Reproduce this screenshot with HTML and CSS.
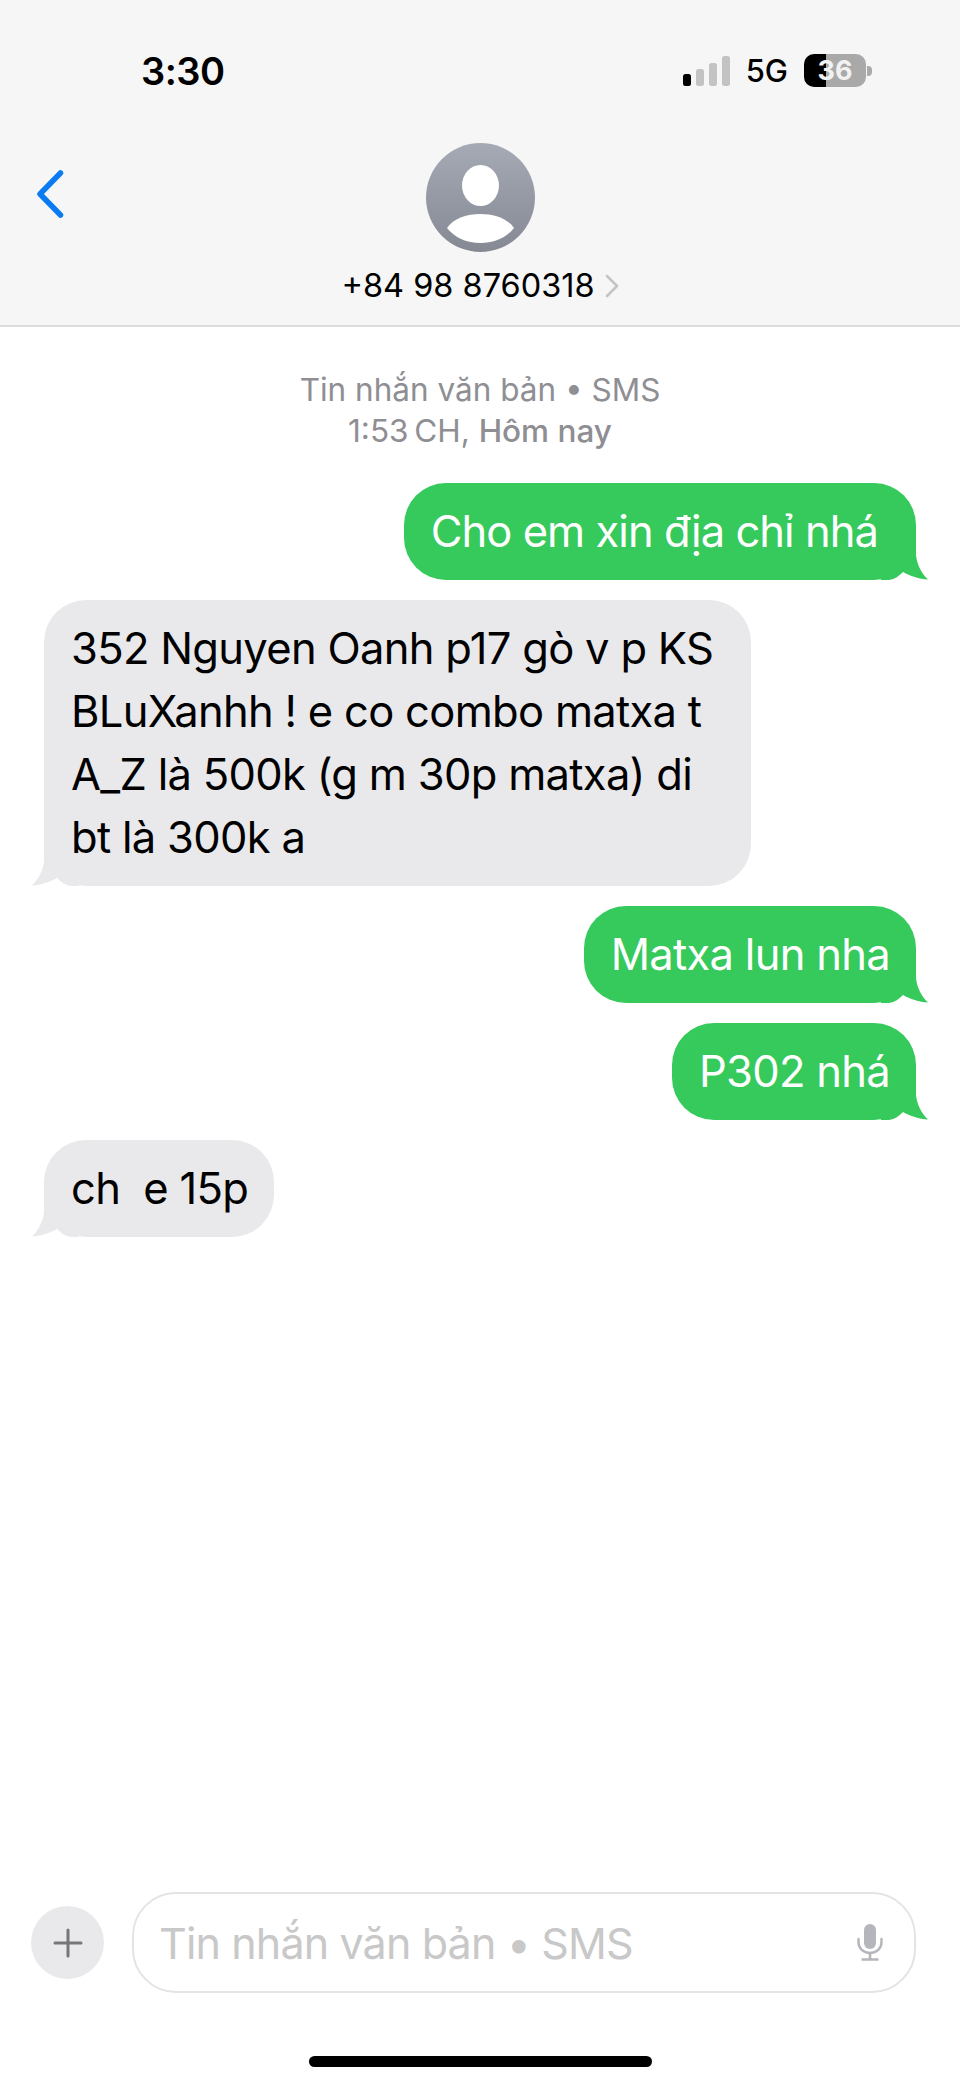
FILE: index.html
```html
<!DOCTYPE html>
<html lang="vi">
<head>
  <meta charset="UTF-8">
  <meta name="viewport" content="width=device-width, initial-scale=1.0">
  <title>Tin nhắn</title>
  <link rel="stylesheet" href="styles.css">
</head>
<body>
  <svg class="defs" width="0" height="0">
    <symbol id="tail" viewBox="0 0 50 50">
      <path d="M35 8 L35 25 C36 35 41 44 47 49.500 C38 49 29 46 22 42 C18 46 14 49 8 50 L0 50 L0 0 Z"/>
    </symbol>
  </svg>

  <header class="top">
    <div class="status">
      <span class="time">3:30</span>
      <div class="status-right">
        <div class="signal">
          <i class="bar bar1 on"></i>
          <i class="bar bar2"></i>
          <i class="bar bar3"></i>
          <i class="bar bar4"></i>
        </div>
        <span class="net">5G</span>
        <div class="battery"><span class="battery-num">36</span></div>
        <i class="battery-tip"></i>
      </div>
    </div>
    <div class="contact">
      <svg class="back" width="28" height="48" viewBox="0 0 28 48"><path d="M24.500 3 L4 24 L24.500 45" fill="none" stroke="#0a7bf0" stroke-width="5.500" stroke-linecap="round" stroke-linejoin="round"/></svg>
      <svg class="avatar" width="109" height="109" viewBox="0 0 109 109">
        <defs>
          <linearGradient id="avatarFill" x1="0" y1="0" x2="0" y2="1">
            <stop offset="0" stop-color="#a6aab4"/>
            <stop offset="1" stop-color="#858994"/>
          </linearGradient>
        </defs>
        <circle cx="54.500" cy="54.500" r="54.500" fill="url(#avatarFill)"/>
        <ellipse cx="54.500" cy="42.500" rx="18.500" ry="20.500" fill="#fff"/>
        <path d="M21 85 C28 75 41 71 54.500 71 C68 71 81 75 88 85 C80 95 68 100 54.500 100 C41 100 29 95 21 85 Z" fill="#fff"/>
      </svg>
      <div class="phone">
        <span>+84 98 8760318</span>
        <svg width="14" height="24" viewBox="0 0 14 24"><path d="M2 2 L12 12 L2 22" fill="none" stroke="#c4c4c6" stroke-width="2.600" stroke-linecap="round" stroke-linejoin="round"/></svg>
      </div>
    </div>
  </header>

  <main class="thread">
    <p class="meta">Tin nhắn văn bản • SMS<br>1:53&thinsp;CH, <b>Hôm nay</b></p>

    <div class="bubble sent wide tight">Cho em xin địa chỉ nhá<svg class="tail"><use href="#tail"/></svg></div>
    <div class="bubble received wide">352 Nguyen Oanh p17 gò v p KS<br>BLuXanhh ! e co combo matxa t<br>A_Z là 500k (g m 30p matxa) di<br>bt là 300k a<svg class="tail"><use href="#tail"/></svg></div>
    <div class="bubble sent">Matxa lun nha<svg class="tail"><use href="#tail"/></svg></div>
    <div class="bubble sent">P302 nhá<svg class="tail"><use href="#tail"/></svg></div>
    <div class="bubble received">ch&nbsp; e 15p<svg class="tail"><use href="#tail"/></svg></div>
  </main>

  <footer class="composer">
    <div class="input-row">
      <div class="plus">
        <svg width="30" height="30" viewBox="0 0 30 30"><path d="M15 2 V28 M2 15 H28" stroke="#76767b" stroke-width="3" stroke-linecap="round"/></svg>
      </div>
      <div class="input">
        <span>Tin nhắn văn bản • SMS</span>
        <svg width="26" height="37" viewBox="0 0 26 37">
          <rect x="7" y="0" width="12" height="25" rx="6" fill="#b4b6bc"/>
          <path d="M1.500 15 V18 C1.500 24.500 6.500 29 13 29 C19.500 29 24.500 24.500 24.500 18 V15" fill="none" stroke="#b4b6bc" stroke-width="2.400" stroke-linecap="round"/>
          <path d="M13 29 V35 M4.500 35.500 H21.500" stroke="#b4b6bc" stroke-width="2.600"/>
        </svg>
      </div>
    </div>
    <div class="home-bar"></div>
  </footer>
</body>
</html>
```

FILE: styles.css
```css
* {
  box-sizing: border-box;
}

body {
  margin: 0;
  height: 2085px;
  display: flex;
  flex-direction: column;
  background-color: #fff;
  color: #000;
  font-family: Inter, "Liberation Sans", sans-serif;
  overflow: hidden;
}

.defs {
  position: absolute;
}

/* header */
.top {
  height: 327px;
  background-color: #f6f6f6;
  border-bottom: 2px solid #dcdcdc;
}

.status {
  height: 143px;
  padding: 50px 88px 0 141px;
  display: flex;
  justify-content: space-between;
  align-items: flex-start;
}

.time {
  font-size: 38px;
  font-weight: 600;
  letter-spacing: -0.5px;
  line-height: 42px;
}

.status-right {
  display: flex;
  align-items: center;
  margin-top: 4px;
  height: 33px;
}

.signal {
  display: flex;
  align-items: flex-end;
  gap: 5px;
  height: 30px;
  margin-top: 1px;
}

.bar {
  display: block;
  width: 8px;
  border-radius: 2.5px;
  background-color: #c3c3c3;
}

.bar.on {
  background-color: #000;
}

.bar1 { height: 12px; }
.bar2 { height: 17px; }
.bar3 { height: 23px; }
.bar4 { height: 30px; }

.net {
  font-size: 31px;
  font-weight: 500;
  margin: 0 16px;
}

.battery {
  width: 62px;
  height: 33px;
  border-radius: 10px;
  display: flex;
  align-items: center;
  justify-content: center;
  background: linear-gradient(to right, #000 36%, #a9a9a9 36%);
}

.battery-num {
  color: #f2f2f2;
  font-size: 27px;
  font-weight: 700;
}

.battery-tip {
  display: block;
  width: 5px;
  height: 10px;
  margin-left: 1px;
  border-radius: 0 4px 4px 0;
  background-color: #a9a9a9;
}

.contact {
  position: relative;
  display: flex;
  flex-direction: column;
  align-items: center;
}

.back {
  position: absolute;
  left: 36px;
  top: 27px;
}

.phone {
  margin-top: 16px;
  display: flex;
  align-items: center;
  gap: 10px;
  font-size: 32.5px;
  line-height: 36px;
}

/* messages */
.thread {
  flex: 1;
  display: flex;
  flex-direction: column;
  gap: 20px;
  padding: 42px 44px 0 44px;
}

.meta {
  margin: 0 0 12px;
  text-align: center;
  color: #8e8e93;
  font-size: 31.5px;
  line-height: 41px;
}

.meta b {
  font-weight: 500;
}

.bubble {
  position: relative;
  isolation: isolate;
  padding: 17px 26px 17px 27px;
  border-radius: 42px;
  font-size: 43.5px;
  letter-spacing: -0.7px;
  line-height: 63px;
  white-space: nowrap;
  width: fit-content;
}

.bubble.wide {
  padding-right: 38px;
}

.bubble.tight {
  letter-spacing: -0.95px;
}

.sent {
  align-self: flex-end;
  background-color: #36c95b;
  color: #fff;
  fill: #36c95b;
}

.received {
  align-self: flex-start;
  background-color: #e9e9eb;
  fill: #e9e9eb;
}

.tail {
  position: absolute;
  z-index: -1;
  bottom: 0;
  width: 50px;
  height: 50px;
}

.sent .tail {
  right: -15px;
}

.received .tail {
  left: -15px;
  transform: scaleX(-1);
}

/* composer */
.composer {
  height: 193px;
  padding-left: 31px;
  padding-right: 44px;
  display: flex;
  flex-direction: column;
}

.input-row {
  display: flex;
  align-items: center;
  gap: 28px;
  height: 101px;
}

.plus {
  flex: none;
  width: 73px;
  height: 73px;
  border-radius: 50%;
  background-color: #e9e9eb;
  display: flex;
  align-items: center;
  justify-content: center;
}

.input {
  flex: 1;
  height: 101px;
  padding: 0 31px 0 25px;
  border: 2px solid #e4e4e4;
  border-radius: 44px;
  display: flex;
  align-items: center;
  justify-content: space-between;
  color: #c8c8c8;
  font-size: 43px;
  letter-spacing: -0.85px;
}

.home-bar {
  align-self: center;
  margin-top: 63px;
  margin-left: 14px;
  width: 343px;
  height: 11px;
  border-radius: 6px;
  background-color: #000;
}
```
